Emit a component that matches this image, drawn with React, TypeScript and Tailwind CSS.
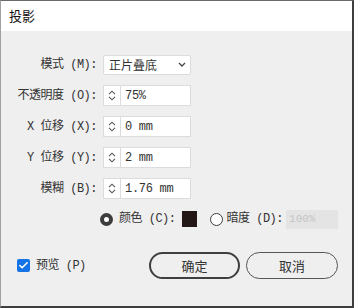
import { Check } from "lucide-react";

const font = "font-['Noto_Sans_CJK_SC','Noto_Sans',sans-serif]";
const labelFont = "font-['Liberation_Mono','Noto_Sans_CJK_SC',monospace] tracking-[-0.5px]";

function Spinner({ value }: { value: string }) {
  return (
    <div className="w-[88px] h-[21px] bg-white border border-[#dcdcdc] flex items-stretch">
      <div className="w-[17px] border-r border-[#dcdcdc] flex flex-col items-center justify-center gap-[1px]">
        <svg width="8" height="5" viewBox="0 0 8 5" fill="none" stroke="#555" strokeWidth="1.1">
          <path d="M1 4.2L4 1.2L7 4.2" />
        </svg>
        <svg width="8" height="5" viewBox="0 0 8 5" fill="none" stroke="#555" strokeWidth="1.1">
          <path d="M1 0.8L4 3.8L7 0.8" />
        </svg>
      </div>
      <div className="pl-[4px] flex items-center font-['Liberation_Mono',monospace] text-[12px] text-[#333] tracking-[-0.3px]">
        {value}
      </div>
    </div>
  );
}

function Row({ label, children }: { label: string; children: React.ReactNode }) {
  return (
    <div className="flex items-center h-[21px]">
      <div className={`w-[97px] pr-[1px] text-right text-[12px] text-[#333] whitespace-nowrap ${labelFont}`}>{label}</div>
      <div className="ml-[5px]">{children}</div>
    </div>
  );
}

export default function App() {
  return (
    <div className={`w-[354px] h-[308px] bg-[#efefef] border-t border-t-[#6a6a6a] border-l border-l-[#a0a0a0] border-r-2 border-r-[#3e3e3e] border-b-2 border-b-[#3e3e3e] flex flex-col ${font}`}>
      <div className="h-[30px] bg-white flex items-center px-[8px] text-[13px] text-[#111]">投影</div>
      <div className="flex-1 flex flex-col pt-[23px]">
        <div className="flex flex-col gap-[10px]">
          <Row label="模式 (M):">
            <div className="w-[88px] h-[20px] bg-white border border-[#dcdcdc] rounded-[2px] flex items-center justify-between pl-[5px] pr-[4px] text-[12px] text-[#333]">
              <span>正片叠底</span>
              <svg width="8" height="5" viewBox="0 0 8 5" fill="none" stroke="#444" strokeWidth="1.3">
                <path d="M1 1L4 4L7 1" />
              </svg>
            </div>
          </Row>
          <Row label="不透明度 (O):">
            <Spinner value="75%" />
          </Row>
          <Row label="X 位移 (X):">
            <Spinner value="0 mm" />
          </Row>
          <Row label="Y 位移 (Y):">
            <Spinner value="2 mm" />
          </Row>
          <Row label="模糊 (B):">
            <Spinner value="1.76 mm" />
          </Row>
          <div className="flex items-center h-[20px] pl-[99px] text-[12px] text-[#333]">
            <div className="w-[13px] h-[13px] rounded-full border-[4px] border-[#3c3c3c] bg-white" />
            <span className={`ml-[6px] ${labelFont}`}>颜色 (C):</span>
            <div className="ml-[6px] w-[15px] h-[16px] bg-[#231815]" />
            <div className="ml-[13px] w-[13px] h-[13px] rounded-full border border-[#3c3c3c] bg-white" />
            <span className={`ml-[4px] ${labelFont}`}>暗度 (D):</span>
            <div className="ml-[3px] w-[52px] h-[19px] bg-[#e4e4e4] flex items-center pl-[3px] font-['Liberation_Mono',monospace] text-[11px] text-[#c4c4c4]">
              100%
            </div>
          </div>
        </div>
        <div className="mt-[23px] flex items-center pl-[16px] pr-[14px]">
          <div className="w-[13px] h-[13px] rounded-[2px] bg-[#1473e6] flex items-center justify-center">
            <Check size={11} color="white" strokeWidth={3.5} />
          </div>
          <span className={`ml-[6px] text-[12px] text-[#333] ${labelFont}`}>预览 (P)</span>
          <div className="ml-auto flex gap-[6px]">
            <button className="w-[91px] h-[27px] rounded-full border-2 border-[#3f3f3f] text-[13px] text-[#333]">确定</button>
            <button className="w-[92px] h-[27px] rounded-full border border-[#555] text-[13px] text-[#333]">取消</button>
          </div>
        </div>
      </div>
    </div>
  );
}
